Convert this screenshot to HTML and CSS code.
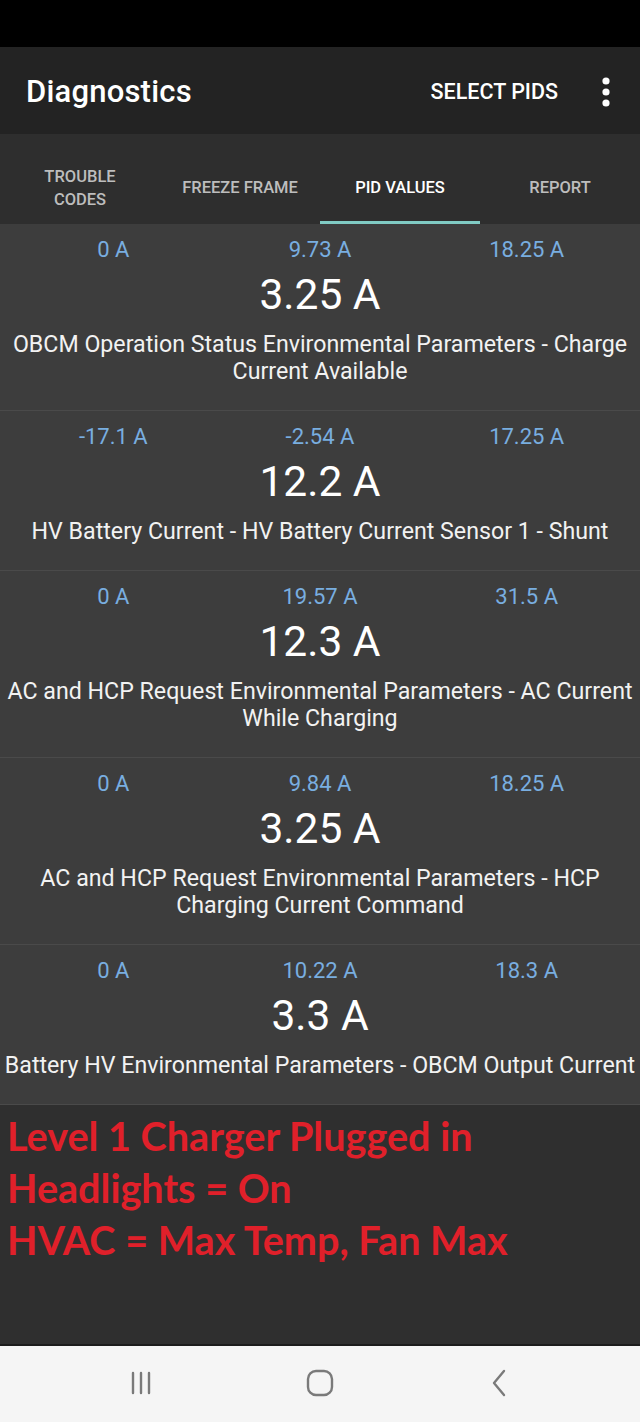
FILE: index.html
```html
<!DOCTYPE html>
<html lang="en">
<head>
    <meta charset="UTF-8">
    <meta name="viewport" content="width=device-width, initial-scale=1.0">
    <title>Diagnostics</title>
    <link rel="stylesheet" href="styles.css">
</head>
<body>
    <div class="status-bar"></div>
    <header class="app-bar">
        <h1 class="title">Diagnostics</h1>
        <span class="action">SELECT PIDS</span>
        <svg class="overflow" width="10" height="32" viewBox="0 0 10 32">
            <circle cx="5" cy="5" r="3.6" fill="#fff"/>
            <circle cx="5" cy="16" r="3.6" fill="#fff"/>
            <circle cx="5" cy="27" r="3.6" fill="#fff"/>
        </svg>
    </header>
    <nav class="tabs">
        <div class="tab">TROUBLE<br>CODES</div>
        <div class="tab">FREEZE FRAME</div>
        <div class="tab active">PID VALUES</div>
        <div class="tab">REPORT</div>
    </nav>

    <div class="pid-list">
        <div class="pid">
            <div class="range">
                <span>0 A</span><span>9.73 A</span><span>18.25 A</span>
            </div>
            <div class="value">3.25 A</div>
            <div class="name">OBCM Operation Status Environmental Parameters - Charge Current Available</div>
        </div>
        <div class="pid">
            <div class="range">
                <span>-17.1 A</span><span>-2.54 A</span><span>17.25 A</span>
            </div>
            <div class="value">12.2 A</div>
            <div class="name">HV Battery Current - HV Battery Current Sensor 1 - Shunt</div>
        </div>
        <div class="pid">
            <div class="range">
                <span>0 A</span><span>19.57 A</span><span>31.5 A</span>
            </div>
            <div class="value">12.3 A</div>
            <div class="name">AC and HCP Request Environmental Parameters - AC Current While Charging</div>
        </div>
        <div class="pid">
            <div class="range">
                <span>0 A</span><span>9.84 A</span><span>18.25 A</span>
            </div>
            <div class="value">3.25 A</div>
            <div class="name">AC and HCP Request Environmental Parameters - HCP Charging Current Command</div>
        </div>
        <div class="pid">
            <div class="range">
                <span>0 A</span><span>10.22 A</span><span>18.3 A</span>
            </div>
            <div class="value">3.3 A</div>
            <div class="name">Battery HV Environmental Parameters - OBCM Output Current</div>
        </div>
    </div>

    <div class="notes">
        <p>Level 1 Charger Plugged in</p>
        <p>Headlights = On</p>
        <p>HVAC = Max Temp, Fan Max</p>
    </div>

    <footer class="nav-bar">
        <svg width="24" height="26" viewBox="0 0 24 26">
            <path d="M3 3v20M11 3v20M19 3v20" stroke="#7a7a7a" stroke-width="2.4" stroke-linecap="round"/>
        </svg>
        <svg width="28" height="28" viewBox="0 0 28 28">
            <rect x="2" y="2" width="24" height="24" rx="8" fill="none" stroke="#7a7a7a" stroke-width="2.4"/>
        </svg>
        <svg width="18" height="28" viewBox="0 0 18 28">
            <path d="M14 2L4 14l10 12" fill="none" stroke="#7a7a7a" stroke-width="2.4" stroke-linecap="round" stroke-linejoin="round"/>
        </svg>
    </footer>
</body>
</html>
```

FILE: styles.css
```css
body {
    margin: 0;
    width: 640px;
    height: 1422px;
    display: flex;
    flex-direction: column;
    background-color: #2f2f2f;
    font-family: Roboto, "Noto Sans", Arial, sans-serif;
    color: #fff;
}
.status-bar {
    height: 47px;
    flex-shrink: 0;
    background: #000;
}
.app-bar {
    height: 87px;
    flex-shrink: 0;
    background: #232323;
    display: flex;
    align-items: center;
    padding: 0 26px;
}
.title {
    margin: 0;
    flex: 1;
    font-size: 31px;
    font-weight: 500;
    letter-spacing: 0.2px;
    padding-top: 2px;
}
.action {
    font-size: 21.5px;
    font-weight: 500;
    margin-right: 43px;
    padding-top: 2px;
}
.overflow {
    margin-right: 3px;
    margin-top: 2px;
}
.tabs {
    height: 90px;
    flex-shrink: 0;
    background: #2e2e2e;
    display: flex;
}
.tab {
    flex: 1;
    display: flex;
    align-items: center;
    justify-content: center;
    text-align: center;
    font-size: 16.5px;
    font-weight: 500;
    line-height: 23px;
    color: #bdbdbd;
    border-bottom: 3px solid transparent;
    padding-top: 26px;
    padding-bottom: 6px;
}
.tab.active {
    color: #fff;
    border-bottom-color: #80cbc4;
}
.pid-list {
    flex-shrink: 0;
    background: #3d3d3d;
}
.pid {
    padding: 12px 10px 25px;
    border-bottom: 1px solid #4a4a4a;
    text-align: center;
}
.range {
    display: grid;
    grid-template-columns: 1fr 1fr 1fr;
    font-size: 22px;
    line-height: 28px;
    color: #79aee0;
}
.value {
    font-size: 42.5px;
    line-height: 52px;
    margin-top: 5px;
}
.name {
    font-size: 23.2px;
    line-height: 27px;
    margin: 10px -8px 0;
    color: #f2f2f2;
}
.notes {
    flex: 1;
    padding: 5px 7px 0;
    border-bottom: 2px solid #1c1c1c;
}
.notes p {
    margin: 0;
    font-family: Lato, "Open Sans", sans-serif;
    font-weight: 700;
    font-size: 39.6px;
    line-height: 52px;
    color: #e0202a;
}
.nav-bar {
    height: 74px;
    flex-shrink: 0;
    background: #f5f5f5;
    display: grid;
    grid-template-columns: repeat(3, 178.5px);
    justify-content: center;
    justify-items: center;
    align-items: center;
    padding-bottom: 2px;
}
```
